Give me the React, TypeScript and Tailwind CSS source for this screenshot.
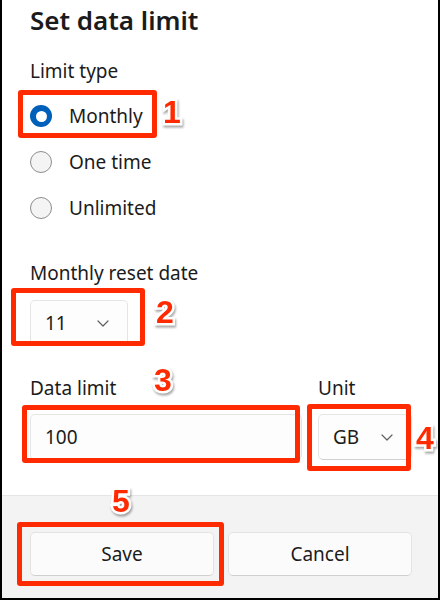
import React from 'react';

const font = { fontFamily: '"Segoe UI", "Noto Sans", "Open Sans", sans-serif' };

function Chevron() {
  return (
    <svg width="12" height="7" viewBox="0 0 12 7" fill="none">
      <polyline points="1,1 6,6 11,1" stroke="#5f5f5f" strokeWidth="1.2" strokeLinecap="round" strokeLinejoin="round" />
    </svg>
  );
}

function Radio({ label, checked }: { label: string; checked?: boolean }) {
  return (
    <div className="flex items-center h-[46px]">
      {checked ? (
        <span className="w-[22px] h-[22px] rounded-full bg-[#005fb8] flex items-center justify-center">
          <span className="w-[11px] h-[11px] rounded-full bg-white" />
        </span>
      ) : (
        <span className="w-[22px] h-[22px] rounded-full border border-[#8d8d8d] bg-[#f4f4f4]" />
      )}
      <span className="ml-[17px] text-[19px] leading-6 text-[#1b1b1b]">{label}</span>
    </div>
  );
}

function Marker({ n, className }: { n: string; className: string }) {
  return (
    <span
      className={`absolute text-[32px] leading-none font-bold text-[#ff2a00] [paint-order:stroke_fill] [-webkit-text-stroke:5px_white] drop-shadow-[1px_2px_1px_rgba(0,0,0,0.35)] ${className}`}
      style={{ fontFamily: '"Liberation Sans", Arial, sans-serif' }}
    >
      {n}
    </span>
  );
}

function Frame({ className }: { className: string }) {
  return <div className={`absolute border-[5px] border-[#ff2a00] rounded-[3px] ${className}`} />;
}

export default function App() {
  return (
    <div className="relative w-[440px] h-[600px] bg-white border-x-2 border-b-2 border-black flex flex-col text-[#1b1b1b]" style={font}>
      <div className="pl-[28px] pr-[26px]">
        <h1 className="pt-[4px] text-[26px] leading-8 font-semibold">Set data limit</h1>
        <p className="mt-[23px] text-[19px] leading-6">Limit type</p>
        <div className="mt-[10px]">
          <Radio label="Monthly" checked />
          <Radio label="One time" />
          <Radio label="Unlimited" />
        </div>

        <p className="mt-[30px] text-[19px] leading-6">Monthly reset date</p>
        <div className="mt-[15px] w-[98px] h-[46px] rounded-[5px] border border-[#e5e5e5] border-b-[#d0d0d0] bg-[#fdfdfd] flex items-center justify-between pl-[14px] pr-[18px]">
          <span className="text-[19px]">11</span>
          <Chevron />
        </div>

        <div className="mt-[30px] flex gap-[16px]">
          <div className="flex-1">
            <p className="text-[19px] leading-6">Data limit</p>
            <div className="mt-[14px] h-[46px] rounded-[5px] border border-[#e5e5e5] border-b-[#bcbcbc] bg-[#fdfdfd] flex items-center pl-[14px]">
              <span className="text-[19px]">100</span>
            </div>
          </div>
          <div className="w-[94px]">
            <p className="text-[19px] leading-6">Unit</p>
            <div className="mt-[14px] h-[46px] rounded-[5px] border border-[#e5e5e5] border-b-[#d0d0d0] bg-[#fdfdfd] flex items-center justify-between pl-[14px] pr-[18px]">
              <span className="text-[19px]">GB</span>
              <Chevron />
            </div>
          </div>
        </div>
      </div>

      <div className="mt-auto h-[103px] bg-[#f3f3f3] border-t border-[#e5e5e5] flex gap-[14px] pl-[28px] pr-[26px] pt-[36px]">
        <button className="flex-1 h-[44px] rounded-[5px] border border-[#e3e3e3] border-b-[#cfcfcf] bg-[#fbfbfb] text-[19px]">Save</button>
        <button className="flex-1 h-[44px] rounded-[5px] border border-[#e3e3e3] border-b-[#cfcfcf] bg-[#fbfbfb] text-[19px]">Cancel</button>
      </div>

      <Frame className="left-[16px] top-[90px] w-[139px] h-[48px]" />
      <Frame className="left-[9px] top-[288px] w-[134px] h-[58px]" />
      <Frame className="left-[20px] top-[405px] w-[278px] h-[58px]" />
      <Frame className="left-[305px] top-[404px] w-[104px] h-[67px]" />
      <Frame className="left-[15px] top-[522px] w-[207px] h-[64px]" />

      <Marker n="1" className="left-[161px] top-[96px]" />
      <Marker n="2" className="left-[154px] top-[296px]" />
      <Marker n="3" className="left-[152px] top-[364px]" />
      <Marker n="4" className="left-[414px] top-[422px]" />
      <Marker n="5" className="left-[110px] top-[485px]" />
    </div>
  );
}
